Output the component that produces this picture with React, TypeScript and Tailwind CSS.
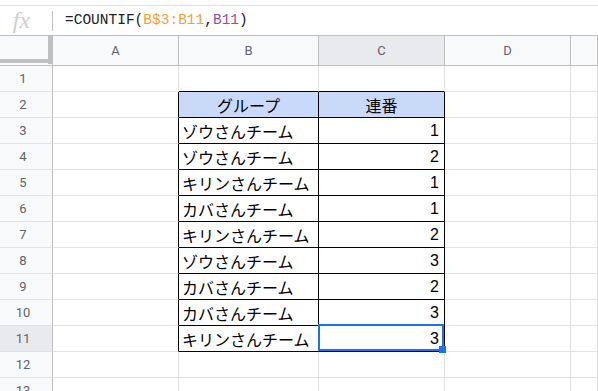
import React from 'react';

const COLS = ['A', 'B', 'C', 'D', ''];

const data: [string, number][] = [
  ['ゾウさんチーム', 1],
  ['ゾウさんチーム', 2],
  ['キリンさんチーム', 1],
  ['カバさんチーム', 1],
  ['キリンさんチーム', 2],
  ['ゾウさんチーム', 3],
  ['カバさんチーム', 2],
  ['カバさんチーム', 3],
  ['キリンさんチーム', 3],
];

const jp = { fontFamily: '"Noto Sans CJK JP", "Liberation Sans", sans-serif' };
const num = { fontFamily: '"Liberation Sans", Arial, sans-serif' };

function Cell({
  row,
  col,
  children,
  className = '',
}: {
  row: number;
  col: number;
  children?: React.ReactNode;
  className?: string;
}) {
  // table B2:C11 has black borders
  const inTable = row >= 2 && row <= 11 && (col === 1 || col === 2);
  const rightBlack = inTable || (col === 0 && row >= 2 && row <= 11);
  const bottomBlack = inTable || (row === 1 && (col === 1 || col === 2));
  const selected = row === 11 && col === 2;

  return (
    <div
      className={`relative flex items-center min-w-0 border-b border-r ${
        rightBlack ? 'border-r-black' : 'border-r-[#e2e2e2]'
      } ${bottomBlack ? 'border-b-black' : 'border-b-[#e2e2e2]'} ${className}`}
    >
      {children}
      {selected && (
        <>
          <div className="absolute -top-[2px] -left-[1px] right-0 bottom-0 border-2 border-[#1a73e8] z-10" />
          <div className="absolute -right-[2px] -bottom-[2px] w-[7px] h-[7px] bg-[#1a73e8] z-20" />
        </>
      )}
    </div>
  );
}

export default function App() {
  const rows = Array.from({ length: 13 }, (_, i) => i + 1);

  return (
    <div className="w-[598px] h-[391px] overflow-hidden bg-white flex flex-col">
      {/* top strip */}
      <div className="h-[6px] border-b border-[#e0e0e0] shrink-0" />

      {/* formula bar */}
      <div className="h-[30px] shrink-0 flex items-center border-b border-[#c0c0c0]">
        <div className="w-[52px] h-full flex items-center justify-center pr-[9px]">
          <span
            className="italic text-[24px] text-[#cfcfcf] leading-none -mt-[2px]"
            style={{ fontFamily: '"Liberation Serif", serif' }}
          >
            fx
          </span>
        </div>
        <div className="w-px h-[20px] bg-[#c6c6c6]" />
        <div
          className="pl-[12px] text-[14.5px] text-[#202124] whitespace-nowrap"
          style={{ fontFamily: '"Liberation Mono", monospace' }}
        >
          =COUNTIF(<span className="text-[#f6a033]">B$3:B11</span>,
          <span className="text-[#934fa8]">B11</span>)
        </div>
      </div>

      {/* grid */}
      <div className="grid grid-cols-[53px_126px_140px_126px_126px_1fr] grid-rows-[30px_repeat(13,26px)] shrink-0">
        {/* column headers */}
        <div className="relative bg-[#f8f9fa] border-b border-r border-[#c0c0c0]">
          <div className="absolute top-0 left-[48px] w-[4px] h-[28px] bg-[#c0c0c0]" />
          <div className="absolute top-[23px] left-0 w-[52px] h-[4px] bg-[#c0c0c0]" />
        </div>
        {COLS.map((c, i) => (
          <div
            key={i}
            className={`flex items-center justify-center border-b border-r border-[#c0c0c0] text-[13px] text-[#5f6368] ${
              c === 'C' ? 'bg-[#e8eaed]' : 'bg-[#f8f9fa]'
            }`}
            style={{ fontFamily: 'Roboto, "Liberation Sans", sans-serif' }}
          >
            {c}
          </div>
        ))}

        {rows.map((r) => {
          const item = r >= 3 && r <= 11 ? data[r - 3] : null;
          return (
            <React.Fragment key={r}>
              <div
                className={`flex items-center justify-center pr-[6px] border-r border-r-[#c0c0c0] border-b border-b-[#e2e2e2] text-[13px] text-[#5f6368] ${
                  r === 11 ? 'bg-[#e8eaed]' : 'bg-[#f8f9fa]'
                }`}
                style={{ fontFamily: 'Roboto, "Liberation Sans", sans-serif' }}
              >
                {r}
              </div>
              <Cell row={r} col={0} />
              <Cell
                row={r}
                col={1}
                className={r === 2 ? 'bg-[#c9daf8] justify-center' : 'pl-[3px]'}
              >
                {r === 2 && (
                  <span className="text-[16px] text-black" style={jp}>
                    グループ
                  </span>
                )}
                {item && (
                  <span className="text-[16px] text-black whitespace-nowrap" style={jp}>
                    {item[0]}
                  </span>
                )}
              </Cell>
              <Cell
                row={r}
                col={2}
                className={r === 2 ? 'bg-[#c9daf8] justify-center' : 'justify-end pr-[5px]'}
              >
                {r === 2 && (
                  <span className="text-[16px] text-black" style={jp}>
                    連番
                  </span>
                )}
                {item && (
                  <span className="text-[16px] text-black" style={num}>
                    {item[1]}
                  </span>
                )}
              </Cell>
              <Cell row={r} col={3} />
              <Cell row={r} col={4} />
            </React.Fragment>
          );
        })}
      </div>
    </div>
  );
}
